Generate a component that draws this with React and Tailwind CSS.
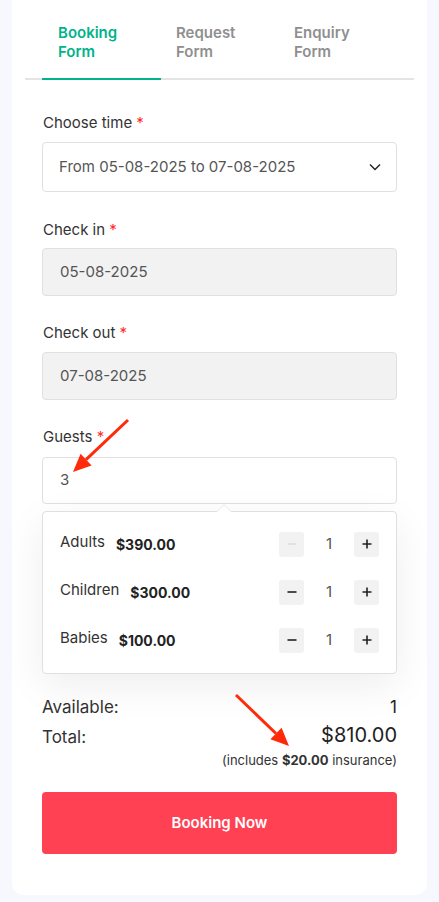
import React from 'react';

const font = { fontFamily: 'Inter, "Noto Sans", sans-serif' };

const Label = ({ children, className = 'mb-[8px]' }) => (
  <p className={`text-[15px] text-[#333] leading-5 pl-px ${className}`}>
    {children} <span className="text-[#ff2a2a]">*</span>
  </p>
);

const Stepper = ({ disabled }) => (
  <div className="flex items-center">
    <button className={`w-[25px] h-[25px] rounded-[3px] bg-[#f2f2f2] flex items-center justify-center ${disabled ? 'text-[#ddd]' : 'text-[#222]'}`}>
      <svg width="12" height="12" viewBox="0 0 12 12"><path d="M1.5 6h9" stroke="currentColor" strokeWidth="1.6" /></svg>
    </button>
    <span className="w-[50px] text-center text-[15px] text-[#555]">1</span>
    <button className="w-[25px] h-[25px] rounded-[3px] bg-[#f2f2f2] flex items-center justify-center text-[#222]">
      <svg width="12" height="12" viewBox="0 0 12 12"><path d="M1.5 6h9M6 1.5v9" stroke="currentColor" strokeWidth="1.6" /></svg>
    </button>
  </div>
);

const GuestRow = ({ name, price, disabled }) => (
  <div className="flex items-center justify-between h-[48px]">
    <div className="flex items-center gap-[11px]">
      <span className="text-[15px] text-[#333] -mt-[4px]">{name}</span>
      <span className="text-[14px] font-bold text-[#222]">{price}</span>
    </div>
    <Stepper disabled={disabled} />
  </div>
);

const App = () => {
  return (
    <div className="min-h-[902px] bg-[#f7f8fd] px-[12px] pb-[9px]" style={font}>
      <div className="bg-white rounded-b-xl pb-[41px]">
        <div className="mx-[13px] border-b-2 border-[#e4e4e4] pl-[17px] flex">
          <div className="w-[119px] pl-[16px] pt-[23px] pb-[17px] border-b-2 border-[#00b38a] -mb-[2px] text-[15px] font-semibold leading-[19px] text-[#00b38a]">
            Booking<br />Form
          </div>
          <div className="w-[118px] pl-[15px] pt-[23px] pb-[17px] text-[15px] font-semibold leading-[19px] text-[#8f8f8f]">
            Request<br />Form
          </div>
          <div className="w-[118px] pl-[15px] pt-[23px] pb-[17px] text-[15px] font-semibold leading-[19px] text-[#8f8f8f]">
            Enquiry<br />Form
          </div>
        </div>

        <div className="px-[30px] pt-[33px]">
          <Label className="mb-[9px]">Choose time</Label>
          <div className="h-[50px] border border-[#e0e0e0] rounded-[4px] flex items-center justify-between pl-[16px] pr-[14px]">
            <span className="text-[15px] text-[#555]">From 05-08-2025 to 07-08-2025</span>
            <svg width="14" height="14" viewBox="0 0 14 14" fill="none"><path d="M2 4.5l5 5 5-5" stroke="#222" strokeWidth="1.4" /></svg>
          </div>

          <div className="mt-[28px]">
            <Label>Check in</Label>
            <div className="h-[48px] border border-[#e0e0e0] bg-[#f2f2f2] rounded-[4px] flex items-center pl-[17px]">
              <span className="text-[15px] text-[#555]">05-08-2025</span>
            </div>
          </div>

          <div className="mt-[27px]">
            <Label className="mb-[9px]">Check out</Label>
            <div className="h-[48px] border border-[#e0e0e0] bg-[#f2f2f2] rounded-[4px] flex items-center pl-[17px]">
              <span className="text-[15px] text-[#555]">07-08-2025</span>
            </div>
          </div>

          <div className="mt-[27px]">
            <Label className="mb-[10px]">Guests</Label>
            <div className="relative h-[47px] border border-[#e0e0e0] rounded-[4px] flex items-center pl-[17px]">
              <span className="text-[15px] text-[#555]">3</span>
              <svg className="absolute left-[18px] -top-[47px]" width="80" height="70" viewBox="0 0 80 70">
                <path d="M67 9L25 48.6" stroke="#ff2a0a" strokeWidth="3" />
                <path d="M12 61L30.6 54.4L19.6 42.8Z" fill="#ff2a0a" />
              </svg>
            </div>
            <div className="relative mt-[7px] border border-[#e0e0e0] rounded-[4px] bg-white px-[17px] pt-[8px] pb-[9px] shadow-[0_12px_40px_rgba(0,0,0,0.07)]">
              <div className="absolute -top-[6px] left-[176px] w-[10px] h-[10px] rotate-45 bg-white border-l border-t border-[#eeeeee]" />
              <GuestRow name="Adults" price="$390.00" disabled />
              <GuestRow name="Children" price="$300.00" />
              <GuestRow name="Babies" price="$100.00" />
            </div>
          </div>

          <div className="mt-[21px] flex justify-between text-[17px] text-[#333] leading-6">
            <span>Available:</span>
            <span className="text-[#222]">1</span>
          </div>
          <div className="relative mt-[6px] flex justify-between items-start">
            <span className="text-[17px] text-[#333] leading-6">Total:</span>
            <div className="text-right">
              <p className="text-[20px] text-[#222] leading-6 -mt-[2px]">$810.00</p>
              <p className="text-[13px] text-[#333] leading-4 mt-[5px]">
                (includes <span className="font-bold">$20.00</span> insurance)
              </p>
            </div>
            <svg className="absolute left-[188px] -top-[36px]" width="64" height="64" viewBox="0 0 64 64">
              <path d="M6 6L46 44.5" stroke="#ff2a0a" strokeWidth="3" />
              <path d="M59 57L51.6 38.7L40.4 50.3Z" fill="#ff2a0a" />
            </svg>
          </div>

          <button className="mt-[24px] w-full h-[62px] rounded-[4px] bg-[#ff4153] text-white text-[15px] font-semibold">
            Booking Now
          </button>
        </div>
      </div>
    </div>
  );
};

export default App;
